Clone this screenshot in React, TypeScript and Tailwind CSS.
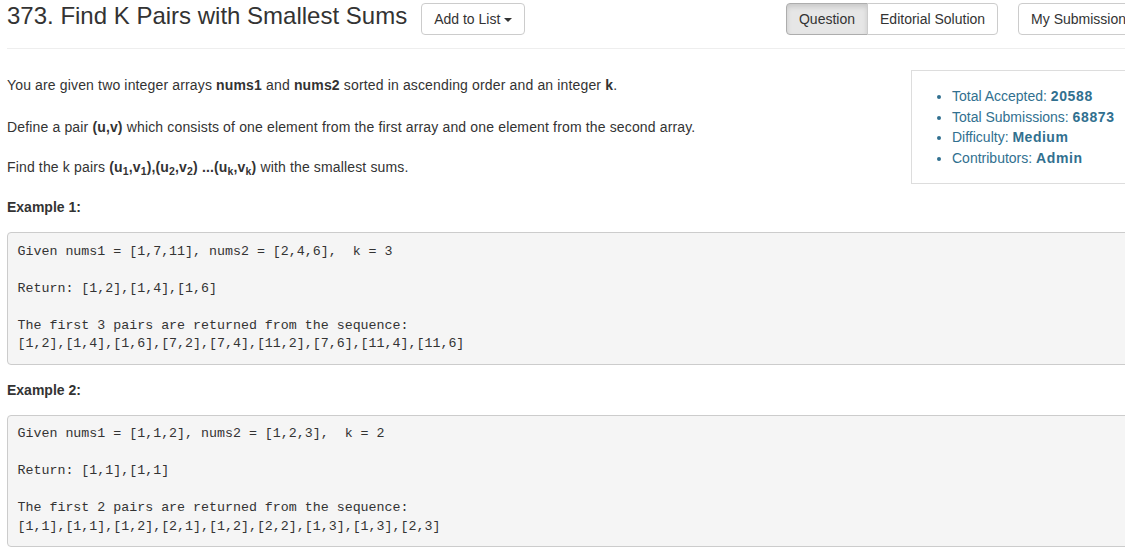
import React from "react";

const sans = { fontFamily: '"Liberation Sans", Arial, Helvetica, sans-serif' };

function Pre({ lines }: { lines: string[] }) {
  return (
    <pre className="m-0 p-[9.5px] bg-[#f5f5f5] border border-[#cccccc] rounded-[4px] text-[#333333] text-[13.3px] leading-[18.6px] font-['Liberation_Mono',_'Courier_New',_monospace] whitespace-pre overflow-hidden">
      {lines.join("\n")}
    </pre>
  );
}

export default function App() {
  return (
    <div className="w-[1125px] h-[553px] overflow-hidden bg-white text-[#333333]" style={sans}>
      <div className="w-[1153px] px-[7px]">
        {/* header */}
        <div className="flex items-start h-[49px] border-b border-[#eeeeee]">
          <h3 className="m-0 text-[24px] leading-[32px] font-normal text-[#333333] whitespace-nowrap">
            373. Find K Pairs with Smallest Sums
          </h3>
          <button className="ml-[14px] mt-[3px] h-[32px] px-[12px] flex items-center border border-[#cccccc] rounded-[4px] bg-white text-[14px] leading-[20px] text-[#333333] whitespace-nowrap">
            Add to List
            <span className="ml-[4px] inline-block w-0 h-0 border-t-[4px] border-t-[#333333] border-x-[4px] border-x-transparent mt-[2px]" />
          </button>
          <div className="ml-auto mt-[3px] flex">
            <button className="h-[32px] px-[12px] border border-[#adadad] rounded-l-[4px] bg-[#e6e6e6] shadow-[inset_0_3px_5px_rgba(0,0,0,0.125)] text-[14px] leading-[20px] text-[#333333]">
              Question
            </button>
            <button className="h-[32px] px-[12px] -ml-px border border-[#cccccc] rounded-r-[4px] bg-white text-[14px] leading-[20px] text-[#333333] whitespace-nowrap">
              Editorial Solution
            </button>
          </div>
          <button className="ml-[20px] mt-[3px] h-[32px] px-[12px] border border-[#cccccc] rounded-[4px] bg-white text-[14px] leading-[20px] text-[#333333] whitespace-nowrap">
            My Submissions
          </button>
        </div>

        {/* intro row */}
        <div className="flex items-start">
          <div className="flex-1 text-[14px] leading-[19px] tracking-[0.15px]">
            <p className="mt-[27px] whitespace-nowrap">
              You are given two integer arrays <b>nums1</b> and <b>nums2</b> sorted in ascending order and an integer <b>k</b>.
            </p>
            <p className="mt-[23px] whitespace-nowrap">
              Define a pair <b>(u,v)</b> which consists of one element from the first array and one element from the second array.
            </p>
            <p className="mt-[21px] whitespace-nowrap">
              Find the k pairs{" "}
              <b>
                (u<sub>1</sub>,v<sub>1</sub>),(u<sub>2</sub>,v<sub>2</sub>) ...(u<sub>k</sub>,v<sub>k</sub>)
              </b>{" "}
              with the smallest sums.
            </p>
            <p className="mt-[21px] mb-[15px] text-[14px] tracking-normal font-bold">Example 1:</p>
          </div>
          <div className="w-[235px] mt-[21px] border border-[#dddddd] py-[15px] pl-[40px]">
            <ul className="list-disc m-0 p-0 text-[14px] leading-[20.5px] text-[#31708f]">
              <li>
                Total Accepted: <b className="tracking-[0.6px]">20588</b>
              </li>
              <li>
                Total Submissions: <b className="tracking-[0.6px]">68873</b>
              </li>
              <li>
                Difficulty: <b className="tracking-[0.5px]">Medium</b>
              </li>
              <li>
                Contributors: <b className="tracking-[0.6px]">Admin</b>
              </li>
            </ul>
          </div>
        </div>

        <Pre
          lines={[
            "Given nums1 = [1,7,11], nums2 = [2,4,6],  k = 3",
            "",
            "Return: [1,2],[1,4],[1,6]",
            "",
            "The first 3 pairs are returned from the sequence:",
            "[1,2],[1,4],[1,6],[7,2],[7,4],[11,2],[7,6],[11,4],[11,6]",
          ]}
        />
        <p className="mt-[16px] mb-[15px] text-[14px] leading-[19px] font-bold">Example 2:</p>
        <Pre
          lines={[
            "Given nums1 = [1,1,2], nums2 = [1,2,3],  k = 2",
            "",
            "Return: [1,1],[1,1]",
            "",
            "The first 2 pairs are returned from the sequence:",
            "[1,1],[1,1],[1,2],[2,1],[1,2],[2,2],[1,3],[1,3],[2,3]",
          ]}
        />
      </div>
    </div>
  );
}
